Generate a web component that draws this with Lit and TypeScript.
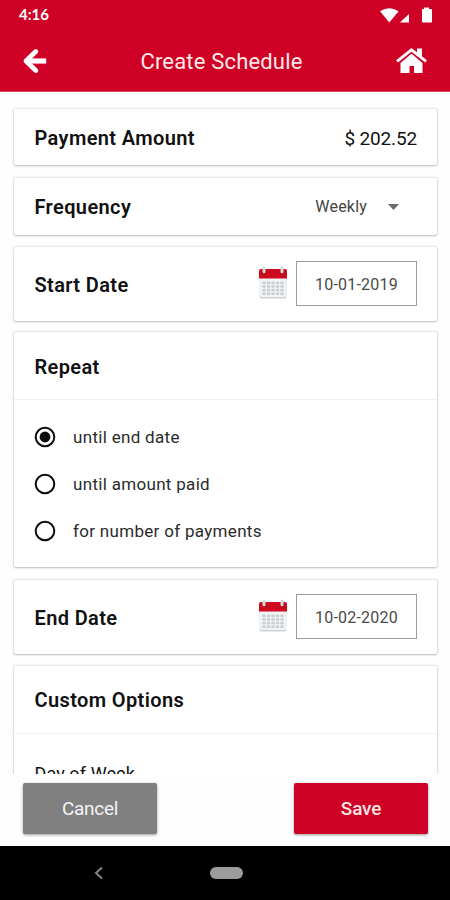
import { LitElement, html, css, svg } from "lit";
import { customElement, property } from "lit/decorators.js";

@customElement("calendar-icon")
class CalendarIcon extends LitElement {
  static styles = css`
    :host { display: block; width: 28px; height: 34px; }
    svg { display: block; }
  `;
  render() {
    const cols = [0, 1, 2, 3, 4];
    const rows = [0, 1, 2, 3];
    return html`<svg width="28" height="34" viewBox="0 0 28 34">
      <rect x="0.5" y="6" width="27" height="26.5" rx="2" fill="#ccd2d2" />
      <rect x="0.5" y="5" width="27" height="26" rx="2" fill="#f0f3f3" />
      <path d="M0 12.500V5Q0 3 2 3H26Q28 3 28 5V12.500Z" fill="#cf0a1e" />
      ${rows.map((r) => cols.map((c) => svg`<rect x=${3.4 + c * 4.5} y=${15.7 + r * 3.6} width="3.200" height="2.400" fill="#c6cecf" />`))}
      ${[5, 23].map((x) => svg`<circle cx=${x} cy="6" r="2.400" fill="#a5141f" /><rect x=${x - 1.5} y="0.500" width="3" height="6.800" rx="1.500" fill="#d5d9da" />`)}
    </svg>`;
  }
}

@customElement("radio-option")
class RadioOption extends LitElement {
  @property() label = "";
  @property({ type: Boolean }) checked = false;
  static styles = css`
    :host { display: flex; align-items: center; height: 46.700px; gap: 17px; color: #2b2b2b; font-size: 17px; letter-spacing: 0.310px; }
    svg { display: block; flex: none; }
  `;
  render() {
    return html`<svg width="22" height="22" viewBox="0 0 22 22">
        <circle cx="11" cy="11" r="9.300" fill="none" stroke="#0c0c0c" stroke-width="2" />
        ${this.checked ? svg`<circle cx="11" cy="11" r="5.400" fill="#0c0c0c" />` : ""}
      </svg><span>${this.label}</span>`;
  }
}

@customElement("app-root")
class AppRoot extends LitElement {
  static styles = css`
    :host { display: flex; flex-direction: column; width: 450px; height: 900px; overflow: hidden; background: #fefefe; font-family: Roboto, sans-serif; color: #111; }
    * { box-sizing: border-box; }
    svg { display: block; }
    .top { height: 92px; flex: none; background: #ce0025; color: #fff; border-bottom: 1px solid #d8445a; }
    .status { height: 30px; display: flex; align-items: center; justify-content: space-between; padding: 0 16px 0 19px; }
    .time { font: 700 15px/18px Lato, sans-serif; margin-top: -2px; }
    .bar { height: 62px; display: flex; align-items: center; justify-content: space-between; padding: 0 22px 0 22px; }
    .title { font-size: 22px; line-height: 28px; letter-spacing: 0.180px; padding-top: 2px; color: #ffe9e6; }
    .list { flex: none; height: 682px; overflow: hidden; padding: 17px 13px 0 14px; display: flex; flex-direction: column; gap: 12px; }
    .card { flex: none; background: #fff; border-radius: 2px; box-shadow: 0 0 2px 1px rgba(0,0,0,.1), 0 1px 2px rgba(0,0,0,.18); }
    .row { display: flex; align-items: center; justify-content: space-between; padding: 0 20px 0 20.500px; }
    .h56 { height: 56px; padding-top: 2px; }
    .h57 { height: 57px; margin-top: 1px; }
    .h74 { height: 74px; }
    .h74 .label { padding-top: 2px; }
    .label { font-size: 20px; font-weight: 600; line-height: 24px; letter-spacing: 0.380px; }
    .amount { font-size: 19px; letter-spacing: -0.150px; }
    .select { display: flex; align-items: center; gap: 21px; padding: 0 18px 0 0; font-size: 16px; letter-spacing: 0.200px; color: #444; }
    .date { display: flex; align-items: center; gap: 9px; margin-top: -2px; }
    .field { width: 121px; height: 45px; border: 1px solid #9c9c9c; display: flex; align-items: center; justify-content: center; padding-top: 2px; font-size: 16px; letter-spacing: 0.200px; color: #4a4a4a; }
    .head { height: 68px; border-bottom: 1px solid #f0f0f0; padding: 23px 21px 0 20.500px; }
    .repeat { height: 235px; margin-top: -1px; }
    .options { padding: 14px 20px 0 20px; }
    .custom { height: 160px; }
    .custom .head { padding-top: 22px; }
    .repeat + .card { margin-top: 1px; }
    .day { padding: 28px 20.500px 0; font-size: 18px; line-height: 24px; letter-spacing: 0.100px; }
    .actions { height: 72px; flex: none; display: flex; justify-content: space-between; align-items: flex-start; padding: 9px 22px 0 23px; }
    .btn { width: 134px; height: 51px; border: 0; border-radius: 2px; font: 400 19px/24px Roboto, sans-serif; padding: 1px 0 0; box-shadow: 0 1px 3px rgba(0,0,0,.4); }
    .cancel { background: #808080; color: #f3f3f3; letter-spacing: -0.300px; }
    .save { background: #ce0025; color: #ffe6e2; font-weight: 500; letter-spacing: -0.200px; }
    .nav { flex: 1; background: #000; display: flex; align-items: center; padding: 0 0 0 94px; gap: 106px; }
    .pill { width: 33px; height: 12px; border-radius: 6px; background: #9c9c9c; }
  `;

  dateRow(label: string, value: string) {
    return html`<section class="card row h74">
      <span class="label">${label}</span>
      <div class="date"><calendar-icon></calendar-icon><div class="field">${value}</div></div>
    </section>`;
  }

  render() {
    return html`
      <header class="top">
        <div class="status">
          <span class="time">4:16</span>
          <svg width="54" height="18" viewBox="0 0 54 18" fill="#fff">
            <path d="M0 5.200Q9.300-0.800 18.600 5.200L9.300 16.500Z" />
            <path d="M20 16.500L29 8V16.500Z" />
            <path d="M42 3H44V1.500H49V3H51Q52 3 52 4V15.500Q52 16.500 51 16.500H43Q42 16.500 42 15.500V4Q42 3 43 3Z" />
          </svg>
        </div>
        <div class="bar">
          <svg width="26" height="26" viewBox="0 0 26 26" fill="none" stroke="#fff" stroke-width="5.200" stroke-linejoin="round">
            <path d="M24.200 13H5" /><path d="M13.800 3.500L4 13L13.800 22.500" stroke-linecap="round" stroke-width="4.800" />
          </svg>
          <span class="title">Create Schedule</span>
          <svg width="33" height="28" viewBox="0 0 33 28">
            <path d="M5.500 16L16.500 6.500L27.500 16V26H19V19H14.500V26H5.500Z" fill="#fff" />
            <path d="M2 15.800L16.500 4.200L31 15.800" fill="none" stroke="#ce0025" stroke-width="3.400" />
            <path d="M2 14.300L16.500 2.800L31 14.300" fill="none" stroke="#fff" stroke-width="2.800" />
            <path d="M22 1.500H27V11L22 7Z" fill="#fff" />
          </svg>
        </div>
      </header>
      <main class="list">
        <section class="card row h56"><span class="label">Payment Amount</span><span class="amount">$ 202.52</span></section>
        <section class="card row h57"><span class="label">Frequency</span>
          <div class="select"><span>Weekly</span><svg width="11" height="6" viewBox="0 0 11 6"><path d="M0 0H11L5.500 6Z" fill="#6a6a6a" /></svg></div>
        </section>
        ${this.dateRow("Start Date", "10-01-2019")}
        <section class="card repeat">
          <div class="head label">Repeat</div>
          <div class="options">
            <radio-option label="until end date" checked></radio-option>
            <radio-option label="until amount paid"></radio-option>
            <radio-option label="for number of payments"></radio-option>
          </div>
        </section>
        ${this.dateRow("End Date", "10-02-2020")}
        <section class="card custom">
          <div class="head label">Custom Options</div>
          <div class="day">Day of Week</div>
        </section>
      </main>
      <footer class="actions">
        <button class="btn cancel">Cancel</button>
        <button class="btn save">Save</button>
      </footer>
      <nav class="nav">
        <svg width="10" height="14" viewBox="0 0 10 14" fill="none" stroke="#858585" stroke-width="2"><path d="M8 1.500L2 7L8 12.500" /></svg>
        <div class="pill"></div>
      </nav>`;
  }
}
